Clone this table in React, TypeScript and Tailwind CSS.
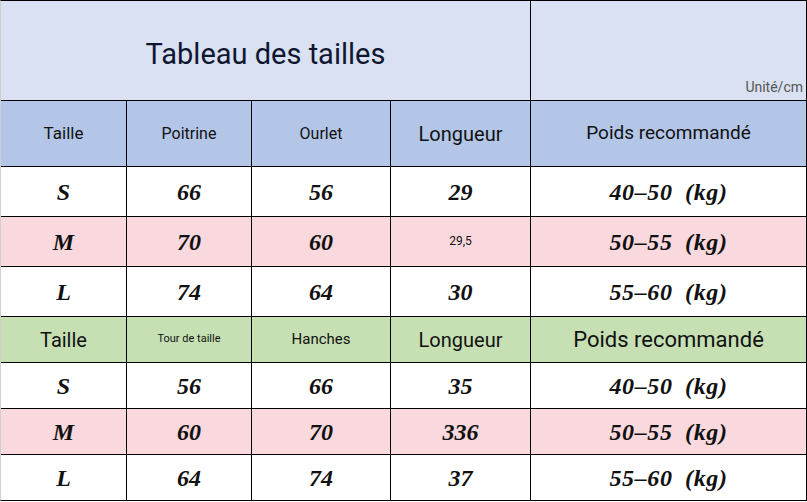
import React from 'react';

const sans = "font-['Roboto','Noto_Sans',sans-serif]";
const serif = "font-['Liberation_Serif',serif] italic font-bold";

type Row = { size: string; a: string; b: string; c: string; w: string; bg: string };

const top: Row[] = [
  { size: 'S', a: '66', b: '56', c: '29', w: '40–50\u2002(kg)', bg: 'bg-white' },
  { size: 'M', a: '70', b: '60', c: '29,5', w: '50–55\u2002(kg)', bg: 'bg-[#f9d9dd]' },
  { size: 'L', a: '74', b: '64', c: '30', w: '55–60\u2002(kg)', bg: 'bg-white' },
];

const bottom: Row[] = [
  { size: 'S', a: '56', b: '66', c: '35', w: '40–50\u2002(kg)', bg: 'bg-white' },
  { size: 'M', a: '60', b: '70', c: '336', w: '50–55\u2002(kg)', bg: 'bg-[#f9d9dd]' },
  { size: 'L', a: '64', b: '74', c: '37', w: '55–60\u2002(kg)', bg: 'bg-white' },
];

const Cell: React.FC<{ className?: string; children?: React.ReactNode }> = ({ className = '', children }) => (
  <div className={`flex items-center justify-center text-[#111] ${className}`}>{children}</div>
);

const DataRows: React.FC<{ rows: Row[] }> = ({ rows }) => (
  <>
    {rows.map((r, i) => (
      <React.Fragment key={i}>
        <Cell className={`${r.bg} ${serif} text-[24px]`}>{r.size}</Cell>
        <Cell className={`${r.bg} ${serif} text-[24px]`}>{r.a}</Cell>
        <Cell className={`${r.bg} ${serif} text-[24px]`}>{r.b}</Cell>
        {r.c === '29,5' ? (
          <Cell className={`${r.bg} ${sans} text-[12px] pb-[2px]`}>{r.c}</Cell>
        ) : (
          <Cell className={`${r.bg} ${serif} text-[24px]`}>{r.c}</Cell>
        )}
        <Cell className={`${r.bg} ${serif} text-[24px] tracking-[0.6px]`}>{r.w}</Cell>
      </React.Fragment>
    ))}
  </>
);

export default function App() {
  return (
    <div className="w-[807px] h-[502px] bg-white">
      <div className="grid grid-cols-[125px_124px_138px_139px_275px] grid-rows-[99px_65px_49px_49px_49px_45px_45px_45px_45px] gap-px bg-black border-t border-r border-b border-black border-l border-l-[#cfcfcf]">
        <div className={`col-span-4 bg-[#d9e1f2] flex items-center justify-center pt-2 ${sans} text-[29px] text-[#0e1630]`}>
          Tableau des tailles
        </div>
        <div className={`bg-[#d9e1f2] flex items-end justify-end pr-[3px] pb-[2px] ${sans} text-[14px] text-[#555]`}>
          Unité/cm
        </div>

        <Cell className={`bg-[#b4c6e7] ${sans} text-[17px]`}>Taille</Cell>
        <Cell className={`bg-[#b4c6e7] ${sans} text-[16px]`}>Poitrine</Cell>
        <Cell className={`bg-[#b4c6e7] ${sans} text-[16px] text-[#1c2a55]`}>Ourlet</Cell>
        <Cell className={`bg-[#b4c6e7] ${sans} text-[20px]`}>Longueur</Cell>
        <Cell className={`bg-[#b4c6e7] ${sans} text-[19px]`}>Poids recommandé</Cell>

        <DataRows rows={top} />

        <Cell className={`bg-[#c6e0b4] ${sans} text-[20px]`}>Taille</Cell>
        <Cell className={`bg-[#c6e0b4] ${sans} text-[11px]`}>Tour de taille</Cell>
        <Cell className={`bg-[#c6e0b4] ${sans} text-[15px]`}>Hanches</Cell>
        <Cell className={`bg-[#c6e0b4] ${sans} text-[20px]`}>Longueur</Cell>
        <Cell className={`bg-[#c6e0b4] ${sans} text-[22px]`}>Poids recommandé</Cell>

        <DataRows rows={bottom} />
      </div>
    </div>
  );
}
